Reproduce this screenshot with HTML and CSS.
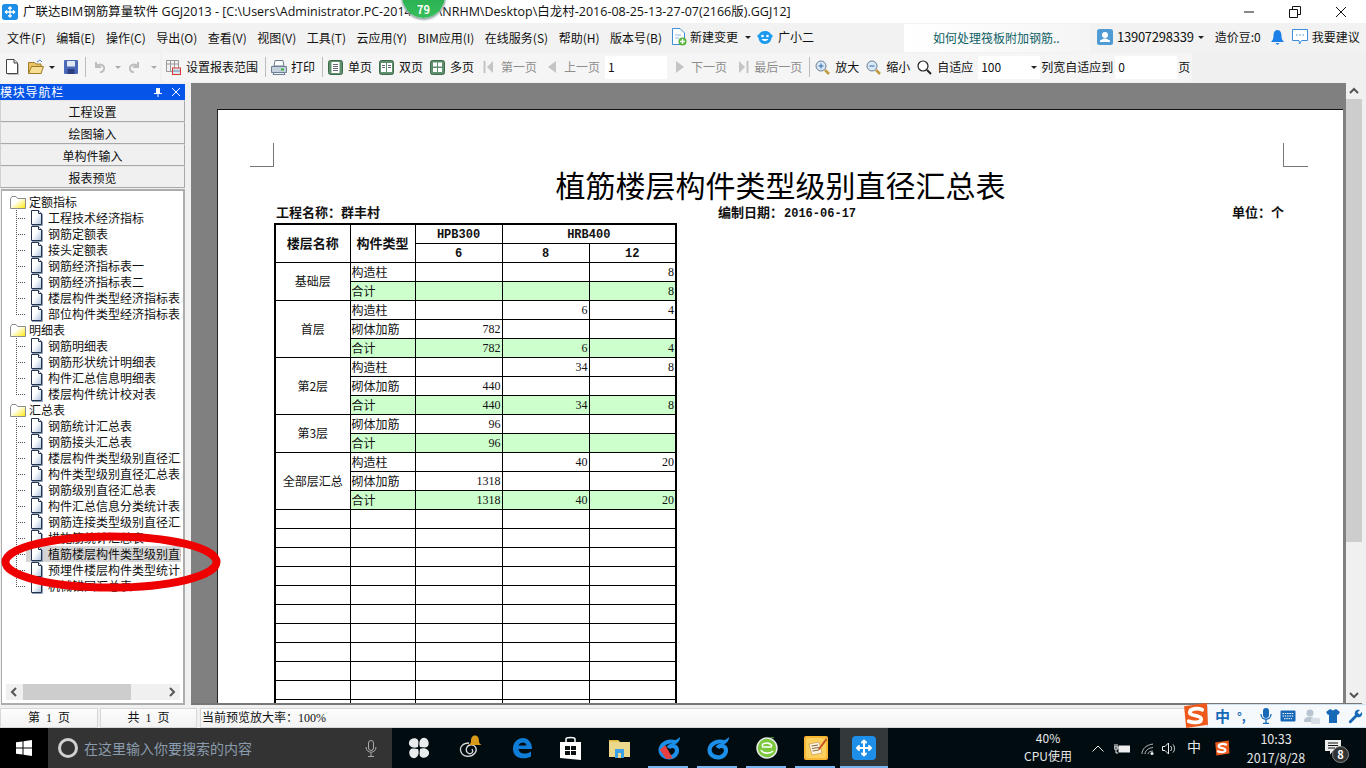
FILE: index.html
```html
<!DOCTYPE html>
<html lang="zh-CN">
<head>
<meta charset="utf-8">
<title>广联达BIM钢筋算量软件 GGJ2013</title>
<link rel="stylesheet" href="styles.css">
</head>
<body>
<svg class="defs" width="0" height="0" aria-hidden="true">
  <defs>
    <linearGradient id="docfill" x1="0" y1="0" x2="1" y2="1"><stop offset="0.45" stop-color="#fff"/><stop offset="1" stop-color="#a9c0dc"/></linearGradient>
    <linearGradient id="foldfill" x1="0" y1="0" x2="1" y2="1"><stop offset="0.4" stop-color="#fff"/><stop offset="1" stop-color="#ffe800"/></linearGradient>
    <symbol id="doc" viewBox="0 0 13 16"><path d="M1.500 .5H8.500L11.500 3.500V14.500H1.500Z" fill="url(#docfill)" stroke="#24324a"/><path d="M8.500 .5V3.500H11.500" fill="#dfe8f3" stroke="#24324a"/><path d="M2 15.500H12.500V4" fill="none" stroke="#8aa0bc"/></symbol>
    <symbol id="folder" viewBox="0 0 16 13"><path d="M.5 12.500V2.500L2 .5H6L7.500 2.500H15.500V12.500Z" fill="url(#foldfill)" stroke="#8c8c8c"/></symbol>
    <symbol id="app" viewBox="0 0 24 24"><rect width="24" height="24" rx="4" fill="#1e8fe8"/><path d="M12 4.500V19.500M5 12H19M10 6.500L12 4.500L14 6.500M10 17.500L12 19.500L14 17.500M7 10L5 12L7 14M17 10L19 12L17 14" fill="none" stroke="#fff" stroke-width="2" stroke-linecap="round" stroke-linejoin="round"/></symbol>
    <symbol id="sogou" viewBox="0 0 26 26"><path d="M2 4L24 1L25 22L4 25Z" fill="#ef5a1c"/><path d="M19.500 7.500C15 5.500 7.500 6.500 7.500 10C7.500 14 18.500 12 18.500 16.500C18.500 20 11 20.500 6.500 18.500" fill="none" stroke="#fff" stroke-width="3.600" stroke-linecap="round"/></symbol>
    <symbol id="gswirl" viewBox="0 0 26 26"><path d="M20 7C13 4 5 8 4 14C3 20 9 24 15 23C20 22 23 17 21 13C19 10 14 10 12.500 13" fill="none" stroke="#1c8fe8" stroke-width="4.500"/><path d="M14 5C18 6 22 4 25 1C25 5 22 9 18 9Z" fill="#1c8fe8"/></symbol>
  </defs>
</svg>

<header class="titlebar">
  <svg class="title-logo"><use href="#app"/></svg>
  <span class="title-text">广联达BIM钢筋算量软件 GGJ2013 - [C:\Users\Administrator.PC-2014<span class="title-gap"></span>\NRHM\Desktop\白龙村-2016-08-25-13-27-07(2166版).GGJ12]</span>
  <div class="win-buttons">
    <svg width="12" height="12" viewBox="0 0 12 12"><path d="M1 6H11" stroke="#111" fill="none"/></svg>
    <svg width="12" height="12" viewBox="0 0 12 12"><path d="M.5 3.500H8.500V11.500H.5ZM3.500 3.500V.5H11.500V8.500H8.500" stroke="#111" fill="none"/></svg>
    <svg width="12" height="12" viewBox="0 0 12 12"><path d="M1 1L11 11M11 1L1 11" stroke="#111" fill="none"/></svg>
  </div>
</header>
<div class="badge">79</div>

<nav class="menubar">
  <div class="menus">
    <span>文件(F)</span><span>编辑(E)</span><span>操作(C)</span><span>导出(O)</span><span>查看(V)</span><span>视图(V)</span><span>工具(T)</span><span>云应用(Y)</span><span>BIM应用(I)</span><span>在线服务(S)</span><span>帮助(H)</span><span>版本号(B)</span>
  </div>
  <div class="menu-tool change">
    <svg width="16" height="18" viewBox="0 0 16 18"><path d="M1.500 .5H9L13.500 5V16.500H1.500Z" fill="#fff" stroke="#3c8ed8"/><path d="M4 7H10M4 10H8" stroke="#8cbbe6"/><circle cx="11.500" cy="13.500" r="4" fill="#57b43c"/><path d="M11.500 11V16M9 13.500H14" stroke="#fff" stroke-width="1.500"/></svg>
    <span>新建变更</span><i class="caret"></i>
  </div>
  <div class="menu-tool xiaoer">
    <svg width="16" height="15" viewBox="0 0 16 15"><path d="M8 1C12 1 14.500 3.500 14.500 7C14.500 11 12 14 8 14C4 14 1.500 11 1.500 7C1.500 3.500 4 1 8 1Z" fill="#1c9aee"/><circle cx="1.800" cy="6" r="1.500" fill="#1c9aee"/><circle cx="14.200" cy="6" r="1.500" fill="#1c9aee"/><circle cx="5.500" cy="6" r="1.300" fill="#fff"/><circle cx="10.500" cy="6" r="1.300" fill="#fff"/><path d="M4.500 9C6 11.500 10 11.500 11.500 9Z" fill="#fff"/></svg>
    <span>广小二</span>
  </div>
  <div class="tip-box">如何处理筏板附加钢筋..</div>
  <div class="user-box">
    <svg width="16" height="16" viewBox="0 0 16 16"><rect width="16" height="16" rx="2.500" fill="#4f9bd4"/><circle cx="8" cy="6" r="3" fill="#fff"/><path d="M3 13H13V11.500L9 9.500H7L3 11.500Z" fill="#fff"/></svg>
    <span class="phone">13907298339</span><i class="caret"></i>
    <span class="beans">造价豆:0</span>
    <svg class="bell" width="13" height="15" viewBox="0 0 13 15"><path d="M6.500 0C9.500 0 10.500 3 10.500 6C10.500 9 11.500 10.500 13 12H0C1.500 10.500 2.500 9 2.500 6C2.500 3 3.500 0 6.500 0Z" fill="#1a7fe6"/><path d="M4.500 13H8.500L6.500 15Z" fill="#1a7fe6"/></svg>
    <svg class="chat" width="16" height="16" viewBox="0 0 16 16"><path d="M.5 .5H15.500V11.500H9.500L7.500 15L7 11.500H.5Z" fill="#fff" stroke="#3b8fdc"/><path d="M4 6H5.500M7.300 6H8.800M10.500 6H12" stroke="#3b8fdc"/></svg>
    <span>我要建议</span>
  </div>
</nav>

<div class="toolbar">
  <div class="tgroup first">
    <svg class="ic" width="14" height="16" viewBox="0 0 14 16"><path d="M1.500 .5H9L12.500 4V14.500H1.500Z" fill="#fff" stroke="#444"/><path d="M9 .5V4H12.500" fill="#ddd" stroke="#444"/><path d="M2.500 15.500H13.500V5" stroke="#bbb" fill="none"/></svg>
    <svg class="ic open" width="16" height="16" viewBox="0 0 16 16"><path d="M.5 14.500V3.500H6.500L8 5H13V14.500Z" fill="#e8c464" stroke="#a07a28"/><path d="M.5 14.500L3.500 7.500H15.500L13 14.500Z" fill="#f7de94" stroke="#a07a28"/><path d="M9 3L12 1L14 3" stroke="#4a86c8" fill="none"/></svg>
    <i class="caret small-gap"></i>
    <svg class="ic save" width="14" height="14" viewBox="0 0 14 14"><rect width="14" height="14" rx="1" fill="#4a68b8"/><rect x="3" y="1" width="8" height="5.500" fill="#dfe6f4"/><rect x="3.500" y="9" width="7" height="5" fill="#2b3f80"/></svg>
    <b class="sep"></b>
    <svg class="ic undo" width="12" height="12" viewBox="0 0 12 12"><path d="M3 1V6H8M3 6C5 3 9 2.500 11 6C12 8 10 11 7 11.500" fill="none" stroke="#bdbdbd" stroke-width="2"/></svg>
    <i class="caret dim"></i>
    <svg class="ic redo" width="12" height="12" viewBox="0 0 12 12"><path d="M9 1V6H4M9 6C7 3 3 2.500 1 6C0 8 2 11 5 11.500" fill="none" stroke="#bdbdbd" stroke-width="2"/></svg>
    <i class="caret dim"></i>
  </div>
  <div class="tgroup second">
    <span class="tool"><svg width="15" height="15" viewBox="0 0 15 15"><path d="M.5 .5H12.500V11.500H.5Z" fill="#f2f2f2" stroke="#999"/><path d="M.5 4H12.500M4.500 .5V11.500M8.500 .5V8" stroke="#999"/><rect x="6.500" y="8" width="8" height="6.500" fill="#d8e4f0" stroke="#d83a32"/><path d="M7 11H14" stroke="#6a88aa"/></svg>设置报表范围</span>
    <b class="sep"></b>
    <span class="tool print"><svg width="16" height="15" viewBox="0 0 16 15"><path d="M4 .5H12L13 6H3Z" fill="#fff" stroke="#6d7f92"/><path d="M.5 6.500H15.500V12.500H.5Z" fill="#c4d0dc" stroke="#6d7f92"/><path d="M3 12.500H13L14 14.500H2Z" fill="#eef2f6" stroke="#6d7f92"/><rect x="10" y="8.500" width="3" height="2" fill="#3cb43c"/></svg>打印</span>
    <b class="sep"></b>
    <span class="tool"><svg width="15" height="15" viewBox="0 0 15 15"><rect x=".5" y=".5" width="14" height="14" rx="2" fill="#5f8f6c" stroke="#3d6a4a"/><rect x="3.500" y="2" width="8" height="11" fill="#fff"/><path d="M5 4.500H10M5 6.500H10M5 8.500H10M5 10.500H10" stroke="#667"/></svg>单页</span>
    <span class="tool"><svg width="15" height="15" viewBox="0 0 15 15"><rect x=".5" y=".5" width="14" height="14" rx="2" fill="#5f8f6c" stroke="#3d6a4a"/><rect x="2" y="3" width="5" height="9" fill="#fff"/><rect x="8" y="3" width="5" height="9" fill="#fff"/><path d="M3 5.500H6M3 7.500H6M9 5.500H12M9 7.500H12" stroke="#667"/></svg>双页</span>
    <span class="tool"><svg width="15" height="15" viewBox="0 0 15 15"><rect x=".5" y=".5" width="14" height="14" rx="2" fill="#5f8f6c" stroke="#3d6a4a"/><rect x="3" y="2.500" width="4" height="4" fill="#fff"/><rect x="8" y="2.500" width="4" height="4" fill="#fff"/><rect x="3" y="8" width="4" height="4" fill="#fff"/><rect x="8" y="8" width="4" height="4" fill="#fff"/></svg>多页</span>
    <span class="tool off first-page"><svg width="10" height="12" viewBox="0 0 10 12"><path d="M.5 0V12H2.500V0ZM10 0L4 6L10 12Z" fill="#c4c4c4"/></svg>第一页</span>
    <span class="tool off prev-page"><svg width="8" height="12" viewBox="0 0 8 12"><path d="M8 0L0 6L8 12Z" fill="#c4c4c4"/></svg>上一页</span>
    <span class="field page-field">1</span>
    <span class="tool off next-page"><svg width="8" height="12" viewBox="0 0 8 12"><path d="M0 0L8 6L0 12Z" fill="#c4c4c4"/></svg>下一页</span>
    <span class="tool off last-page"><svg width="10" height="12" viewBox="0 0 10 12"><path d="M0 0L6 6L0 12ZM7.500 0V12H9.500V0Z" fill="#c4c4c4"/></svg>最后一页</span>
    <b class="sep"></b>
    <span class="tool"><svg width="15" height="15" viewBox="0 0 15 15"><circle cx="6" cy="6" r="5" fill="#d8e8f6" stroke="#6a7f92"/><path d="M3.500 6H8.500M6 3.500V8.500" stroke="#2a6aa8"/><path d="M10 10L14 14" stroke="#c09a40" stroke-width="2.500"/></svg>放大</span>
    <span class="tool"><svg width="15" height="15" viewBox="0 0 15 15"><circle cx="6" cy="6" r="5" fill="#d8e8f6" stroke="#6a7f92"/><path d="M3.500 6H8.500" stroke="#2a6aa8"/><path d="M10 10L14 14" stroke="#c09a40" stroke-width="2.500"/></svg>缩小</span>
    <span class="tool"><svg width="15" height="15" viewBox="0 0 15 15"><circle cx="6" cy="6" r="5" fill="#fff" stroke="#222" stroke-width="1.200"/><path d="M10 10L14 14" stroke="#222" stroke-width="2"/></svg>自适应</span>
    <span class="field zoom-field">100<i class="caret"></i></span>
    <span class="fit-label">列宽自适应到</span>
    <span class="field fit-field">0</span>
    <span class="fit-unit">页</span>
  </div>
</div>

<main class="workspace">
  <aside class="navpanel">
    <div class="navhead"><span>模块导航栏</span>
      <svg width="10" height="10" viewBox="0 0 10 10"><path d="M3 1H7V6H9V7H5.500V10H4.500V7H1V6H3Z" fill="#fff"/></svg>
      <svg width="10" height="10" viewBox="0 0 10 10"><path d="M1 1L9 9M9 1L1 9" stroke="#fff" fill="none"/></svg>
    </div>
    <button class="navbtn">工程设置</button>
    <button class="navbtn">绘图输入</button>
    <button class="navbtn">单构件输入</button>
    <button class="navbtn">报表预览</button>
    <div class="treebox">
      <div class="tree">
        <div class="node"><svg class="fld"><use href="#folder"/></svg>定额指标</div>
        <div class="leaf"><i class="br"></i><span class="it"><svg class="dc"><use href="#doc"/></svg>工程技术经济指标</span></div>
        <div class="leaf"><i class="br"></i><span class="it"><svg class="dc"><use href="#doc"/></svg>钢筋定额表</span></div>
        <div class="leaf"><i class="br"></i><span class="it"><svg class="dc"><use href="#doc"/></svg>接头定额表</span></div>
        <div class="leaf"><i class="br"></i><span class="it"><svg class="dc"><use href="#doc"/></svg>钢筋经济指标表一</span></div>
        <div class="leaf"><i class="br"></i><span class="it"><svg class="dc"><use href="#doc"/></svg>钢筋经济指标表二</span></div>
        <div class="leaf"><i class="br"></i><span class="it"><svg class="dc"><use href="#doc"/></svg>楼层构件类型经济指标表</span></div>
        <div class="leaf"><i class="br last"></i><span class="it"><svg class="dc"><use href="#doc"/></svg>部位构件类型经济指标表</span></div>
        <div class="node"><svg class="fld"><use href="#folder"/></svg>明细表</div>
        <div class="leaf"><i class="br"></i><span class="it"><svg class="dc"><use href="#doc"/></svg>钢筋明细表</span></div>
        <div class="leaf"><i class="br"></i><span class="it"><svg class="dc"><use href="#doc"/></svg>钢筋形状统计明细表</span></div>
        <div class="leaf"><i class="br"></i><span class="it"><svg class="dc"><use href="#doc"/></svg>构件汇总信息明细表</span></div>
        <div class="leaf"><i class="br last"></i><span class="it"><svg class="dc"><use href="#doc"/></svg>楼层构件统计校对表</span></div>
        <div class="node"><svg class="fld"><use href="#folder"/></svg>汇总表</div>
        <div class="leaf"><i class="br"></i><span class="it"><svg class="dc"><use href="#doc"/></svg>钢筋统计汇总表</span></div>
        <div class="leaf"><i class="br"></i><span class="it"><svg class="dc"><use href="#doc"/></svg>钢筋接头汇总表</span></div>
        <div class="leaf"><i class="br"></i><span class="it"><svg class="dc"><use href="#doc"/></svg>楼层构件类型级别直径汇总表</span></div>
        <div class="leaf"><i class="br"></i><span class="it"><svg class="dc"><use href="#doc"/></svg>构件类型级别直径汇总表</span></div>
        <div class="leaf"><i class="br"></i><span class="it"><svg class="dc"><use href="#doc"/></svg>钢筋级别直径汇总表</span></div>
        <div class="leaf"><i class="br"></i><span class="it"><svg class="dc"><use href="#doc"/></svg>构件汇总信息分类统计表</span></div>
        <div class="leaf"><i class="br"></i><span class="it"><svg class="dc"><use href="#doc"/></svg>钢筋连接类型级别直径汇总表</span></div>
        <div class="leaf"><i class="br"></i><span class="it"><svg class="dc"><use href="#doc"/></svg>措施筋统计汇总表</span></div>
        <div class="leaf"><i class="br"></i><span class="it sel"><svg class="dc"><use href="#doc"/></svg>植筋楼层构件类型级别直径汇总表</span></div>
        <div class="leaf"><i class="br"></i><span class="it"><svg class="dc"><use href="#doc"/></svg>预埋件楼层构件类型统计表</span></div>
        <div class="leaf"><i class="br last"></i><span class="it"><svg class="dc"><use href="#doc"/></svg>机械锚固汇总表</span></div>
      </div>
      <div class="hbar">
        <svg width="17" height="16" viewBox="0 0 17 16"><path d="M10 4L6 8L10 12" fill="none" stroke="#555" stroke-width="2"/></svg>
        <div class="hthumb"></div>
        <svg width="17" height="16" viewBox="0 0 17 16"><path d="M7 4L11 8L7 12" fill="none" stroke="#555" stroke-width="2"/></svg>
      </div>
    </div>
  </aside>

  <section class="preview">
    <div class="canvas">
      <article class="page">
        <div class="marks"><i class="mark-l"></i><i class="mark-r"></i></div>
        <h1 class="report-title">植筋楼层构件类型级别直径汇总表</h1>
        <div class="meta"><span class="m1">工程名称：群丰村</span><span class="m2">编制日期：<em>2016-06-17</em></span><span class="m3">单位：个</span></div>
        <table class="report">
          <colgroup><col class="c1"><col class="c2"><col class="c3"><col class="c3"><col class="c3"></colgroup>
          <thead>
            <tr><th rowspan="2">楼层名称</th><th rowspan="2">构件类型</th><th class="mono">HPB300</th><th class="mono" colspan="2">HRB400</th></tr>
            <tr><th class="mono">6</th><th class="mono">8</th><th class="mono">12</th></tr>
          </thead>
          <tbody>
            <tr><td class="fl" rowspan="2">基础层</td><td>构造柱</td><td></td><td></td><td class="n">8</td></tr>
            <tr class="sum"><td>合计</td><td></td><td></td><td class="n">8</td></tr>
            <tr><td class="fl" rowspan="3">首层</td><td>构造柱</td><td></td><td class="n">6</td><td class="n">4</td></tr>
            <tr><td>砌体加筋</td><td class="n">782</td><td></td><td></td></tr>
            <tr class="sum"><td>合计</td><td class="n">782</td><td class="n">6</td><td class="n">4</td></tr>
            <tr><td class="fl" rowspan="3">第2层</td><td>构造柱</td><td></td><td class="n">34</td><td class="n">8</td></tr>
            <tr><td>砌体加筋</td><td class="n">440</td><td></td><td></td></tr>
            <tr class="sum"><td>合计</td><td class="n">440</td><td class="n">34</td><td class="n">8</td></tr>
            <tr><td class="fl" rowspan="2">第3层</td><td>砌体加筋</td><td class="n">96</td><td></td><td></td></tr>
            <tr class="sum"><td>合计</td><td class="n">96</td><td></td><td></td></tr>
            <tr><td class="fl" rowspan="3">全部层汇总</td><td>构造柱</td><td></td><td class="n">40</td><td class="n">20</td></tr>
            <tr><td>砌体加筋</td><td class="n">1318</td><td></td><td></td></tr>
            <tr class="sum"><td>合计</td><td class="n">1318</td><td class="n">40</td><td class="n">20</td></tr>
            <tr><td></td><td></td><td></td><td></td><td></td></tr>
            <tr><td></td><td></td><td></td><td></td><td></td></tr>
            <tr><td></td><td></td><td></td><td></td><td></td></tr>
            <tr><td></td><td></td><td></td><td></td><td></td></tr>
            <tr><td></td><td></td><td></td><td></td><td></td></tr>
            <tr><td></td><td></td><td></td><td></td><td></td></tr>
            <tr><td></td><td></td><td></td><td></td><td></td></tr>
            <tr><td></td><td></td><td></td><td></td><td></td></tr>
            <tr><td></td><td></td><td></td><td></td><td></td></tr>
            <tr><td></td><td></td><td></td><td></td><td></td></tr>
            <tr><td></td><td></td><td></td><td></td><td></td></tr>
          </tbody>
        </table>
      </article>
    </div>
    <div class="vbar">
      <svg width="16" height="16" viewBox="0 0 16 16"><path d="M4 10L8 6L12 10" fill="none" stroke="#555" stroke-width="2"/></svg>
      <div class="vthumb"></div>
      <svg width="16" height="16" viewBox="0 0 16 16"><path d="M4 6L8 10L12 6" fill="none" stroke="#555" stroke-width="2"/></svg>
    </div>
  </section>
</main>

<footer class="statusbar">
  <span class="st st1">第 1 页</span>
  <span class="st st2">共 1 页</span>
  <span class="st st3">当前预览放大率：100%</span>
</footer>

<div class="taskbar">
  <div class="start"><svg width="16" height="16" viewBox="0 0 16 16"><path d="M0 2.300L6.500 1.400V7.500H0ZM7.500 1.200L16 0V7.500H7.500ZM0 8.500H6.500V14.600L0 13.700ZM7.500 8.500H16V16L7.500 14.800Z" fill="#fff"/></svg></div>
  <div class="search">
    <i class="ring"></i>
    <span class="search-text">在这里输入你要搜索的内容</span>
    <svg width="12" height="17" viewBox="0 0 12 17"><rect x="3.500" y=".5" width="5" height="10" rx="2.500" fill="none" stroke="#aaa"/><path d="M1 7C1 14 11 14 11 7M6 13V16.500M3 16.500H9" fill="none" stroke="#aaa"/></svg>
  </div>
  <div class="apps">
    <span class="app"><svg width="22" height="22" viewBox="0 0 22 22"><path d="M10 10C5 12 0 9 1 5C2 1 8 0 10 3C11 5 10 8 10 10ZM12 10C10 5 13 0 17 1C21 2 22 8 19 10C17 11 14 10 12 10ZM12 12C17 10 22 13 21 17C20 21 14 22 12 19C11 17 12 14 12 12ZM10 12C12 17 9 22 5 21C1 20 0 14 3 12C5 11 8 12 10 12Z" fill="#e8ecec"/></svg></span>
    <span class="app"><svg width="26" height="26" viewBox="0 0 26 26"><path d="M12 8C6 8 2 12 4 17C6 22 14 23 18 18C21 14 18 9 13 10C9 11 8 16 11 18C14 20 17 17 15 14" fill="none" stroke="#d8d8d8" stroke-width="1.300"/><path d="M18 0.500C21 .5 22 3 22 6C22 8 23 9 24.500 10H11.500C13 9 14 8 14 6C14 3 15 .5 18 .5Z" fill="#d99a1c"/></svg></span>
    <span class="app"><svg width="20" height="21" viewBox="0 0 20 21"><path d="M1 9C2 3 7 0 11 0C16 0 20 4 20 11H6.500C7 16 14 17 19 13.500V18.500C13 22 1 21 1 11ZM6.500 7.500H14.500C14 3.500 8 3.500 6.500 7.500Z" fill="#0f7dd8"/></svg></span>
    <span class="app"><svg width="21" height="24" viewBox="0 0 21 24"><path d="M0 6H21V24L0 22Z" fill="#fff"/><path d="M6 6V3C6 1 15 1 15 3V6" fill="none" stroke="#fff" stroke-width="1.500"/><path d="M5 10H10V14H5ZM11 10H16V14H11ZM5 15H10V19H5ZM11 15H16V19H11Z" fill="#0a0f12"/></svg></span>
    <span class="app"><svg width="22" height="19" viewBox="0 0 22 19"><path d="M0 1H9L11 3H21V18H0Z" fill="#ecd88c"/><path d="M0 1H9L10 2.500H0Z" fill="#e3b93a"/><rect x="6" y="10" width="9" height="9" fill="#3aa0e8"/><rect x="9" y="14" width="3" height="5" fill="#ecd88c"/></svg></span>
    <span class="app"><svg width="24" height="24" viewBox="0 0 26 26"><use href="#gswirl"/><path d="M3 15L9 10L17 24L10 25Z" fill="#e84040"/></svg></span>
    <span class="app"><svg width="24" height="24" viewBox="0 0 26 26"><use href="#gswirl"/></svg></span>
    <span class="app"><svg width="22" height="22" viewBox="0 0 22 22"><circle cx="11" cy="11" r="10" fill="#7cc83c" stroke="#e8e8e8" stroke-width="1.500"/><path d="M6 10H16M5 13C7 17 14 17 17 14M6 9C7 5 14 5 16 9" fill="none" stroke="#fff" stroke-width="1.600"/><path d="M13 0C15 0 17 1 18 .5" stroke="#3f9c3a" fill="none"/></svg></span>
    <span class="app"><svg width="24" height="24" viewBox="0 0 24 24"><rect width="24" height="24" rx="2" fill="#f7b733"/><rect x="2" y="2" width="20" height="20" rx="1" fill="#fbd05e"/><path d="M5 8L15 6L18 17L8 19Z" fill="#f9f3e2" stroke="#b87a2a" stroke-width=".5"/><path d="M7.500 10L14 9M8 12.500L15 11.500M8.500 15L15 14" stroke="#8a6a3a"/><path d="M22 2L14 13L15.500 14L23 4Z" fill="#c8501e"/></svg></span>
    <span class="app active"><svg width="24" height="24"><use href="#app"/></svg></span>
  </div>
  <div class="tray">
    <div class="cpu"><span>40%</span><span>CPU使用</span></div>
    <svg class="t-up" width="12" height="7" viewBox="0 0 12 7"><path d="M.5 6.500L6 1L11.500 6.500" fill="none" stroke="#eee"/></svg>
    <svg class="t-bat" width="17" height="11" viewBox="0 0 17 11"><rect x="4.500" y="2.500" width="11.500" height="7" fill="#eee"/><path d="M1 1V4M3 1V4M0 4H4V6H0ZM2 6V10H4" stroke="#eee" fill="none"/></svg>
    <svg class="t-wifi" width="13" height="12" viewBox="0 0 13 12"><path d="M1 11C1 6 5 2 12 1M4 11C4 8 7 5 12 4.500M7 11C7 9.500 9 8 12 8" fill="none" stroke="#bbb"/><circle cx="11" cy="10.500" r="1.500" fill="#eee"/></svg>
    <svg class="t-vol" width="15" height="13" viewBox="0 0 15 13"><path d="M.5 4.500H3L6.500 1V12L3 8.500H.5Z" fill="none" stroke="#eee"/><path d="M8.500 4C10 5.500 10 7.500 8.500 9M11 2.500C13 5 13 8 11 10.500" fill="none" stroke="#eee"/></svg>
    <span class="t-ime">中</span>
    <svg class="t-sg" width="16" height="16"><use href="#sogou"/></svg>
    <div class="clock"><span>10:33</span><span>2017/8/28</span></div>
    <div class="notify">
      <svg width="16" height="15" viewBox="0 0 16 15"><path d="M0 0H16V11H8L5 14.500V11H0Z" fill="#eee"/><path d="M3 3H13M3 5.500H13M3 8H10" stroke="#111"/></svg>
      <span class="notify-count">8</span>
    </div>
  </div>
</div>

<div class="imebar">
  <svg class="ime-logo" width="27" height="27"><use href="#sogou"/></svg>
  <span class="ime-zh">中</span>
  <span class="ime-punct">°,</span>
  <svg width="12" height="16" viewBox="0 0 12 16"><rect x="3" y="0" width="6" height="10" rx="3" fill="#1769b8"/><path d="M1 6C1 13 11 13 11 6M6 11V15M3 15.500H9" fill="none" stroke="#1769b8" stroke-width="1.300"/></svg>
  <svg width="16" height="12" viewBox="0 0 16 12"><rect x=".5" y=".5" width="15" height="11" rx="1" fill="#1769b8"/><path d="M2.500 3.500H13.500M2.500 6H13.500M4 8.700H12" stroke="#fff" stroke-dasharray="1.500 .8"/></svg>
  <svg width="16" height="15" viewBox="0 0 16 15"><circle cx="6" cy="4" r="3.500" fill="#b8c4d0"/><path d="M0 13C0 8 3 8 6 8C9 8 11 9 11 13Z" fill="#b8c4d0"/><rect x="7" y="9" width="9" height="6" rx="1" fill="#d8dee6"/></svg>
  <svg class="ime-shirt" width="14" height="14" viewBox="0 0 14 14"><path d="M4 0L7 1.500L10 0L14 3L12 6L11 5.500V14H3V5.500L2 6L0 3Z" fill="#1769b8"/></svg>
  <svg width="15" height="15" viewBox="0 0 15 15"><path d="M1 12L7 6C6 3 8 0 12 1L9.500 3.500L11.500 5.500L14 3C15 7 12 9 9 8L3 14C2 15 0 13 1 12Z" fill="#1769b8"/></svg>
</div>

<svg class="circle-mark" width="224" height="64" viewBox="0 0 224 64" aria-hidden="true"><ellipse cx="111" cy="31" rx="105.500" ry="25.500" fill="none" stroke="#ee0000" stroke-width="8"/></svg>
</body>
</html>
```

FILE: styles.css
```css
* { box-sizing: border-box; }
html, body { margin: 0; padding: 0; }
body {
  width: 1366px; height: 768px; overflow: hidden; position: relative;
  display: flex; flex-direction: column;
  font: 12px/16px "Noto Sans CJK SC", "Liberation Sans", sans-serif;
  color: #111; background: #f0f0f0;
}
.defs { position: absolute; }
i, em { font-style: normal; }

/* title bar */
.titlebar { height: 23px; background: #fff; display: flex; align-items: center; padding-left: 2px; flex: none; }
.title-logo { width: 16px; height: 16px; margin-right: 5px; }
.title-text { font-family: "Open Sans", "Noto Sans CJK SC", sans-serif; font-size: 12.500px; white-space: nowrap; }
.title-gap { display: inline-block; width: 26px; }
.win-buttons { margin-left: auto; display: flex; gap: 34px; padding-right: 19px; }
.badge {
  position: absolute; left: 402px; top: -27px; width: 43px; height: 45px; border-radius: 50%;
  background: linear-gradient(#1f9d4a, #35bf5a); box-shadow: 0 1px 2px 1px #9aa;
  color: #fff; font-weight: 700; font-size: 11px; text-align: center; padding-top: 28px;
}

/* menu bar */
.menubar { height: 30px; flex: none; display: flex; align-items: center; padding: 0 0 1px 7px; background: #f2f2f2; }
.menus { display: flex; gap: 10.500px; white-space: nowrap; }
.menu-tool { display: flex; align-items: center; gap: 4px; white-space: nowrap; }
.change { position: absolute; left: 671px; top: 28px; gap: 3px; }
.xiaoer { position: absolute; left: 757px; top: 29px; gap: 5px; }
.caret { display: inline-block; width: 0; height: 0; border: 3px solid transparent; border-top: 3px solid #222; border-bottom: 0; margin-left: 4px; vertical-align: middle; }
.caret.dim { border-top-color: #aaa; }
.tip-box { position: absolute; left: 904px; top: 24px; width: 186px; height: 28px; padding-left: 29px; line-height: 27px; color: #0d6066; background: linear-gradient(90deg, #fff, #f5f5f5); }
.user-box { position: absolute; left: 1097px; top: 23px; height: 28px; display: flex; align-items: center; white-space: nowrap; }
.phone { margin-left: 4px; letter-spacing: -.25px; font-size: 13px; }
.beans { margin-left: 11px; }
.bell { margin-left: 10px; }
.chat { margin: 0 4px 0 8px; }

/* toolbar */
.toolbar { height: 29px; flex: none; display: flex; background: #f0f0f0; }
.tgroup { display: flex; align-items: center; height: 100%; padding-bottom: 1px; background: #f5f5f5; border-radius: 3px; white-space: nowrap; }
.tgroup.first { width: 160px; padding-left: 5px; }
.tgroup.second { margin-left: 2px; padding-left: 4px; flex: none; width: 1030px; }
.ic.open { margin-left: 9px; }
.caret.small-gap { margin-left: 5px; }
.ic.save { margin-left: 9px; }
.sep { display: block; flex: none; width: 1px; height: 20px; background: #bcbcbc; margin: 0 5px 0 0; }
.first .sep { margin: 0 7px; }
.ic.redo { margin-left: 8px; }
.first .caret.dim { margin-left: 10px; }
.tool { display: inline-flex; align-items: center; gap: 5px; margin-right: 7px; }
.tool.print { gap: 4px; }
.off { color: #8d8d8d; }
.first-page { margin-left: 2px; gap: 8px; margin-right: 11px; }
.prev-page { gap: 8px; margin-right: 5px; }
.next-page { gap: 7px; margin-left: 9px; margin-right: 12px; }
.last-page { gap: 5px; margin-right: 7px; }
.field { display: flex; align-items: center; height: 23px; width: 62px; background: #fff; padding-left: 3px; font-size: 12px; }
.zoom-field { position: relative; justify-content: space-between; padding-right: 3px; margin-left: -2px; }
.fit-label { margin-left: 1px; }
.fit-field { margin-left: 2px; }
.fit-unit { margin-left: 1px; }

/* workspace */
.workspace { height: 626px; flex: none; display: flex; padding: 1px 4px 3px 0; }
.navpanel { width: 185px; margin: 1px 6px 0 0; display: flex; flex-direction: column; }
.navhead { height: 16px; flex: none; background: #0655e8; color: #fff; display: flex; align-items: center; gap: 8px; padding-right: 4px; font-size: 12px; letter-spacing: .8px; }
.navhead span { margin-right: auto; }
.navbtn { height: 22px; flex: none; padding: 2px 0 0; font: inherit; color: #111; background: #f0f0f0; border: 1px solid #a8a8a8; border-top-color: #e6e6e6; border-left-color: #d0d0d0; }
.treebox { flex: 1; margin: 1px 0 0 1px; min-height: 0; display: flex; flex-direction: column; background: #fff; border: 2px solid #adadad; border-width: 2px 2px 2px 1px; }
.tree { flex: 1; min-height: 0; overflow: hidden; padding-top: 3px; margin-right: 2px; white-space: nowrap; }
.node { height: 16px; display: flex; align-items: center; gap: 3px; padding-left: 8px; }
.fld { width: 16px; height: 13px; flex: none; }
.leaf { height: 16px; display: flex; padding-left: 14px; }
.br {
  flex: none; width: 10px; height: 16px;
  background:
    repeating-linear-gradient(90deg, #555 0 1px, transparent 1px 2px) 0 8px / 100% 1px no-repeat,
    repeating-linear-gradient(#555 0 1px, transparent 1px 2px) 0 0 / 1px 100% no-repeat;
}
.br.last {
  background:
    repeating-linear-gradient(90deg, #555 0 1px, transparent 1px 2px) 0 8px / 100% 1px no-repeat,
    repeating-linear-gradient(#555 0 1px, transparent 1px 2px) 0 0 / 1px 9px no-repeat;
}
.it { flex: 1; min-width: 0; display: flex; align-items: center; gap: 5px; padding-left: 4px; }
.it.sel { background: #d4d4d4; }
.dc { width: 13px; height: 16px; flex: none; }
.hbar { height: 16px; flex: none; margin: 0 3px 3px 4px; display: flex; align-items: center; justify-content: space-between; background: #f0f0f0; }
.hthumb { width: 108px; height: 16px; background: #cdcdcd; margin-right: auto; }

/* preview */
.preview { flex: 1; min-width: 0; display: flex; border-bottom: 2px solid #777; }
.canvas { flex: 1; min-width: 0; overflow: hidden; background: #808080; padding: 26px 3px 0 26px; }
.page { height: 700px; background: #fff; border-left: 1px solid #222; border-top: 1px solid #111; padding: 33px 0 0 56px; }
.marks { display: flex; justify-content: space-between; height: 24px; margin: 0 35px 0 -24px; }
.mark-l, .mark-r { display: block; width: 24px; height: 24px; border-bottom: 1px solid #777; }
.mark-l { border-right: 1px solid #777; }
.mark-r { border-left: 1px solid #777; width: 25px; }
.report-title { margin: -2px 0 0 -56px; height: 38px; font-size: 30px; line-height: 38px; font-weight: 400; text-align: center; color: #000; }
.meta { height: 17px; margin: 0 0 3px; display: flex; font-weight: 700; font-size: 13px; line-height: 17px; padding-left: 2px; }
.meta em { font-family: "Liberation Mono", monospace; font-size: 12px; margin-left: 1px; }
.m1 { width: 442px; }
.m2 { width: 514px; }
.report { border-collapse: collapse; table-layout: fixed; width: 401px; border: 2px solid #000; }
.c1 { width: 75px; } .c2 { width: 65px; } .c3 { width: 87px; }
.report tr { height: 19px; }
.report th, .report td { border: 1px solid #000; padding: 0 1px; font-size: 12px; line-height: 14px; height: 19px; overflow: hidden; white-space: nowrap; }
.report th { font-weight: 700; font-size: 13px; text-align: center; }
.report th.mono { font-family: "Liberation Mono", monospace; font-size: 12px; padding-top: 3px; }
.report td.fl { text-align: center; }
.report td.n { text-align: right; font-family: "Liberation Serif", serif; font-size: 12px; }
.sum td { background: #ccffcc; }
.vbar { width: 16px; flex: none; background: #f0f0f0; display: flex; flex-direction: column; justify-content: space-between; align-items: stretch; }
.vthumb { width: 16px; height: 443px; background: #cdcdcd; margin-bottom: auto; }

/* status bar */
.statusbar { height: 20px; flex: none; display: flex; gap: 2px; background: #f0f0f0; font-family: "Liberation Serif", "Noto Sans CJK SC", serif; font-size: 12px; line-height: 18px; word-spacing: 3px; }
.st { background: linear-gradient(#fdfdfd, #f2f2f2); border: 1px solid #d8d8d8; text-align: center; }
.st1 { width: 98px; }
.st2 { width: 97px; }
.st3 { flex: 1; margin-left: 1px; text-align: left; padding-left: 1px; }

/* taskbar */
.taskbar { height: 40px; flex: none; display: flex; background: #010c11; color: #e8e8e8; }
.start { width: 48px; background: #000; display: flex; align-items: center; justify-content: center; }
.search { width: 344px; background: #333; display: flex; align-items: center; padding-left: 10px; }
.ring { width: 20px; height: 20px; border-radius: 50%; border: 3px solid #d0d0d0; flex: none; }
.search-text { font-size: 14px; margin-left: 6px; width: 281px; color: #8a9bad; }
.apps { display: flex; align-items: stretch; flex: none; padding-left: 2px; }
.app { width: 49px; display: flex; align-items: center; justify-content: center; position: relative; }
.app:nth-child(2) { width: 54px; }
.app:nth-child(n+6)::after { content: ""; position: absolute; left: 4px; right: 5px; bottom: 0; height: 2px; background: #76b5ef; }
.app.active { background: #33393b; width: 48px; }
.app.active::after { left: 0; right: 0; }
.tray { flex: 1; display: flex; align-items: center; position: relative; font-size: 12.500px; line-height: 20px; }
.cpu { position: absolute; left: 135px; top: 1px; width: 50px; display: flex; flex-direction: column; align-items: center; white-space: nowrap; line-height: 18px; font-size: 12px; }
.t-up { position: absolute; left: 204px; top: 17px; }
.t-bat { position: absolute; left: 226px; top: 15px; }
.t-wifi { position: absolute; left: 253px; top: 15px; }
.t-vol { position: absolute; left: 274px; top: 14px; }
.t-ime { position: absolute; left: 299px; top: 8px; font-size: 14px; }
.t-sg { position: absolute; left: 326px; top: 12px; }
.clock { position: absolute; left: 355px; top: 1px; width: 66px; display: flex; flex-direction: column; align-items: center; line-height: 19px; }
.notify { position: absolute; left: 437px; top: 12px; }
.notify-count { position: absolute; left: 7px; top: 6px; width: 17px; height: 17px; border-radius: 50%; background: #333; border: 1px solid #888; color: #fff; font-size: 11px; font-weight: 700; line-height: 15px; text-align: center; }

/* overlays */
.imebar { position: absolute; left: 1207px; top: 704px; width: 159px; height: 24px; background: #f6f9fc; border: 1px solid #cfe0f0; border-right: 0; display: flex; align-items: center; gap: 8px; padding-left: 7px; }
.ime-logo { position: absolute; left: -26px; top: -3px; }
.ime-zh { color: #1769b8; font-size: 15px; font-weight: 700; margin-right: -1px; }
.ime-punct { color: #1769b8; font-weight: 700; width: 15px; }
.ime-shirt { margin-left: -2px; }
.circle-mark { position: absolute; left: 0; top: 531px; pointer-events: none; }
```
